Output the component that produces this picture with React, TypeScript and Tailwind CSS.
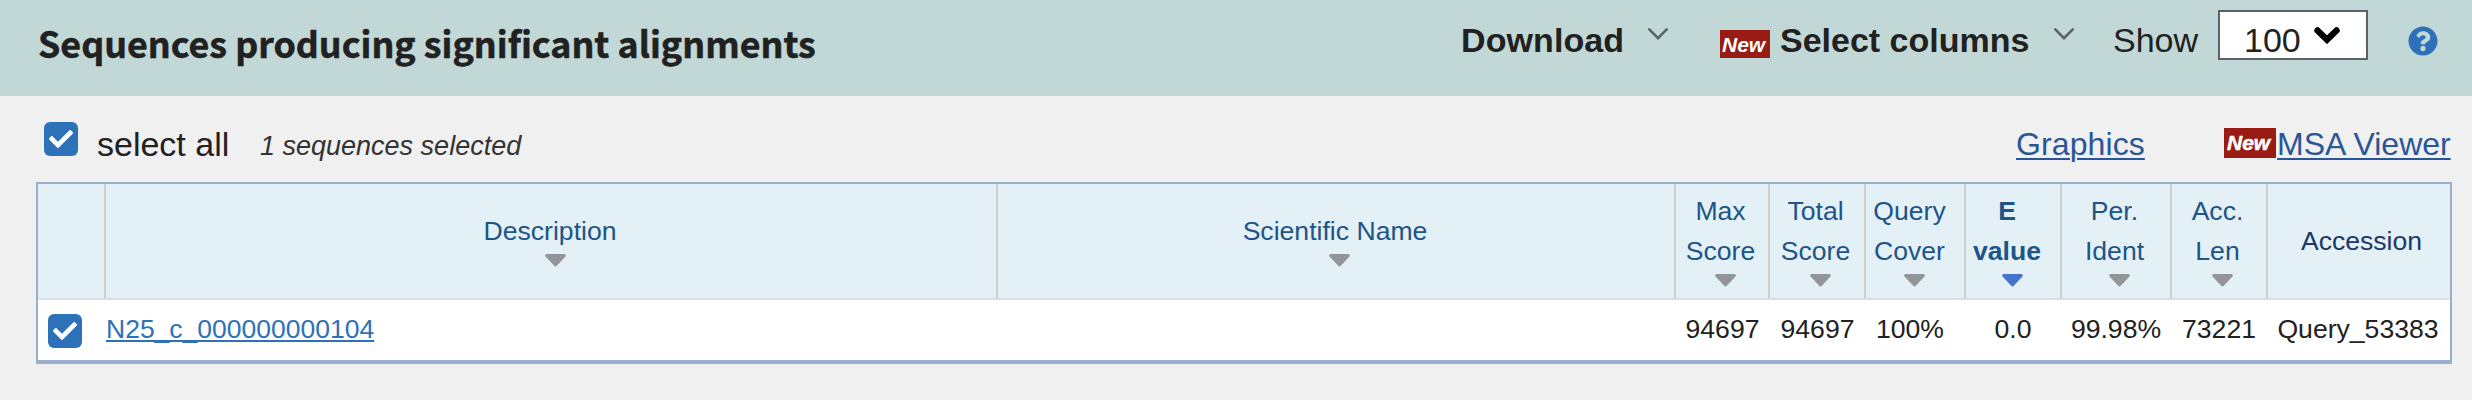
import { FaCheck, FaQuestionCircle } from "react-icons/fa";

function ThinChevron({ className }: { className: string }) {
  return (
    <svg viewBox="0 0 20 12" className={`h-3 w-5 shrink-0 ${className}`} fill="none">
      <path d="M1.3 1.4 10 10.2 18.7 1.4" stroke="#5b616b" strokeWidth="2.6" strokeLinecap="round" />
    </svg>
  );
}

function Caret({ active }: { active?: boolean }) {
  return (
    <svg viewBox="0 0 21 13" className="h-[13px] w-[21px]">
      <path
        d="M1.6 0H19.4Q21 .1 20.8 1.7Q20.7 2.5 20 3.1L12 11.6Q10.5 13.3 9 11.6L1 3.1Q.3 2.5 .2 1.7Q0 .1 1.6 0Z"
        fill={active ? "#4574cf" : "#939599"}
      />
    </svg>
  );
}

function Checkbox({ className }: { className: string }) {
  return (
    <span
      role="checkbox"
      aria-checked="true"
      className={`flex h-[34px] w-[34px] shrink-0 items-center justify-center rounded-md bg-[#2d72b8] text-white ${className}`}
    >
      <FaCheck size={24} />
    </span>
  );
}

type Column = { lines: string[]; cell: string; width: string; head: string; body: string; sorted?: boolean };

const columns: Column[] = [
  { lines: ["Max", "Score"], cell: "94697", width: "w-[94px]", head: "pr-[3px]", body: "pl-[1px]" },
  { lines: ["Total", "Score"], cell: "94697", width: "w-[96px]", head: "pr-[3px]", body: "pl-[1px]" },
  { lines: ["Query", "Cover"], cell: "100%", width: "w-[100px]", head: "pr-[11px]", body: "pr-[10px]" },
  { lines: ["E", "value"], cell: "0.0", width: "w-24", head: "pr-3", body: "", sorted: true },
  { lines: ["Per.", "Ident"], cell: "99.98%", width: "w-[110px]", head: "pr-[3px]", body: "" },
  { lines: ["Acc.", "Len"], cell: "73221", width: "w-24", head: "pr-[3px]", body: "" },
];

export default function App() {
  return (
    <div className="h-[400px] w-[2472px] overflow-hidden bg-[#f0f0f0] font-['Liberation_Sans',Arial,sans-serif] whitespace-nowrap text-[#212121]">
      <header className="flex h-24 items-start bg-[#c2d8d6]">
        <h1 className="mt-4 ml-[38px] w-[1423px] font-['Noto_Sans_CJK_SC',sans-serif] text-[35.8px] leading-[52px] font-bold [-webkit-text-stroke:0.5px_#212121]">
          Sequences producing significant alignments
        </h1>
        <span className="mt-5 w-[165px] text-[34px] leading-10 font-bold tracking-[0.1px]">Download</span>
        <ThinChevron className="mt-7 ml-[22px]" />
        <span className="mt-[30px] ml-[52px] h-7 w-[50px] bg-[#981b14] pl-[2px] text-[21px] leading-[29px] font-bold text-white italic">
          New
        </span>
        <span className="mt-5 ml-[10px] w-[250px] text-[34px] leading-10 font-bold">Select columns</span>
        <ThinChevron className="mt-7 ml-6" />
        <span className="mt-5 ml-[39px] w-[88px] text-[34px] leading-10">Show</span>
        <div className="mt-[10px] ml-[17px] flex h-[50px] w-[150px] items-start border-2 border-[#5b616b] bg-white pt-2">
          <span className="ml-6 w-[57px] text-[34px] leading-10">100</span>
          <svg viewBox="0 0 26 17" className="mt-[7px] ml-[13px] h-[17px] w-[26px]" fill="none">
            <path d="M3.5 3.5 13 12.7 22.5 3.5" stroke="#000" strokeWidth="6.4" strokeLinecap="round" />
          </svg>
        </div>
        <FaQuestionCircle size={30} className="mt-[26px] ml-10 text-[#2d72b8]" />
      </header>

      <div className="flex h-[86px] items-start">
        <Checkbox className="mt-[26px] ml-11" />
        <span className="mt-7 ml-[19px] w-[163px] text-[34px] leading-10">select all</span>
        <span className="mt-[30px] w-[1756px] text-[27px] leading-10 text-[#333] italic">1 sequences selected</span>
        <a className="mt-7 w-[129px] text-[32px] leading-10 tracking-[0.1px] text-[#2a5695] underline decoration-2 underline-offset-[3px]">
          Graphics
        </a>
        <span className="mt-8 ml-[79px] h-[30px] w-[52px] bg-[#981b14] pl-[3px] text-[21px] leading-[29px] font-bold text-white italic [-webkit-text-stroke:0.5px_white]">
          New
        </span>
        <a className="mt-7 ml-[1px] text-[32px] leading-10 text-[#2a5695] underline decoration-2 underline-offset-[3px]">
          MSA Viewer
        </a>
      </div>

      <section className="ml-9 w-[2416px] border-2 border-b-4 border-[#9aafcb] bg-white text-[26.6px]">
        <div className="flex h-[116px] border-b-2 border-[#d5e0e9] bg-[#e3f1f7] leading-10 text-[#205487]">
          <div className="w-[68px] border-r-2 border-[#cecece]" />
          <div className="flex w-[892px] flex-col items-center border-r-2 border-[#cecece] pt-[27px]">
            <span className="pr-[2px]">Description</span>
            <span className="mt-[3px] flex pl-2">
              <Caret />
            </span>
          </div>
          <div className="flex w-[678px] flex-col items-center border-r-2 border-[#cecece] pt-[27px]">
            <span className="pr-[2px]">Scientific Name</span>
            <span className="mt-[3px] flex pl-[7px]">
              <Caret />
            </span>
          </div>
          {columns.map((c) => (
            <div
              key={c.lines.join(" ")}
              className={`flex flex-col items-center border-r-2 border-[#cecece] pt-[7px] ${c.width} ${c.head} ${c.sorted ? "font-bold" : ""}`}
            >
              <span>{c.lines[0]}</span>
              <span>{c.lines[1]}</span>
              <span className="mt-[3px] flex pl-[10px]">
                <Caret active={c.sorted} />
              </span>
            </div>
          ))}
          <div className="flex-1 pt-[37px] pl-[5px] text-center text-[#1c3768]">Accession</div>
        </div>

        <div className="flex h-[60px] pt-[9px] leading-10">
          <div className="w-[68px]">
            <Checkbox className="mt-[5px] ml-[10px]" />
          </div>
          <div className="w-[892px]">
            <a className="text-[26.5px] text-[#2d72b8] underline decoration-2 underline-offset-2 [text-decoration-skip-ink:none]">
              N25_c_000000000104
            </a>
          </div>
          <div className="w-[678px]" />
          {columns.map((c) => (
            <div key={c.lines.join(" ")} className={`text-center ${c.width}`}>
              <div className={`mr-[2px] ${c.body}`}>{c.cell}</div>
            </div>
          ))}
          <div className="flex-1 pr-[2px] text-center">Query_53383</div>
        </div>
      </section>
    </div>
  );
}
